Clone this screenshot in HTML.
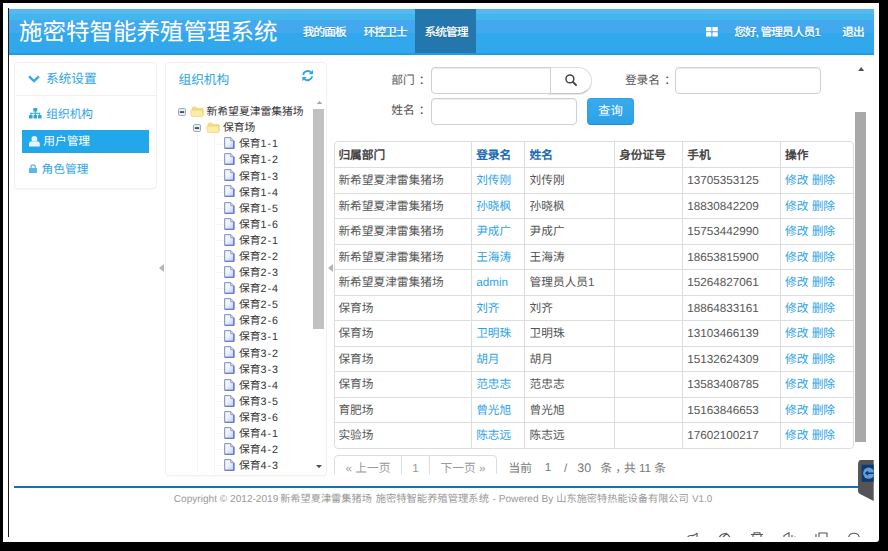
<!DOCTYPE html>
<html lang="zh-CN">
<head>
<meta charset="utf-8">
<title>施密特智能养殖管理系统</title>
<style>
*{box-sizing:border-box;margin:0;padding:0}
html,body{width:888px;height:551px;overflow:hidden;background:#000}
body{position:relative;text-rendering:geometricPrecision;font-family:"Liberation Sans",sans-serif;font-size:11.7px;color:#555}
.abs,.tg,.tt,.hl{position:absolute}
#win{position:absolute;left:3px;top:3px;width:876px;height:539px;background:#fff;border-bottom-right-radius:3px}
#lline{position:absolute;left:8px;top:8px;width:1px;height:529px;background:#1c1c1c}
#hdr{position:absolute;left:9px;top:9px;width:865px;height:45.6px;
 background:linear-gradient(to bottom,#55b8ee 0,#55b8ee 4.9px,#42b7ee 4.9px,#42b7ee 10.9px,#44a8ee 10.9px,#44a8ee 24px,#31a7ec 24px,#31a7ec 44px,#1c9ee6 44px,#1c9ee6 100%)}
#brand{position:absolute;left:18.9px;top:15.5px;height:32px;line-height:32px;font-size:23.5px;color:#fff;white-space:nowrap;font-weight:300}
.nav{position:absolute;top:11px;height:44px;line-height:44px;font-size:11.7px;color:#fff;white-space:nowrap;letter-spacing:-.9px;font-weight:normal;text-shadow:.4px 0 0 rgba(255,255,255,.8),0 1px 1px rgba(0,0,0,.18)}
#act{position:absolute;left:415px;top:9px;width:60.8px;height:44px;background:#2377ad}
.panel{position:absolute;background:#fff;border:1px solid #f0f0f0;border-radius:4px;box-shadow:0 1px 1px rgba(0,0,0,.025)}
.lnk{color:#2fa4e7}
.sb{position:absolute;white-space:nowrap;font-size:11.7px;color:#2fa4e7;line-height:14px}
.tt{white-space:nowrap;font-size:10.8px;color:#333;line-height:16px;height:16px}
.vd{font-size:10.7px;letter-spacing:.9px}
.hl{width:9px;height:0;border-top:1px dotted #eee}
.vl{position:absolute;width:0;border-left:1px dotted #eee}
.lab{position:absolute;white-space:nowrap;font-size:11.7px;color:#555;line-height:16px;text-align:left}
.lab i{font-style:normal;margin-left:4.2px}
.inp{position:absolute;background:#fff;border:1px solid #d0d0d0;border-radius:4px;box-shadow:inset 0 1px 1px rgba(0,0,0,.075)}
table{position:absolute;left:334.2px;top:141.3px;width:520.2px;border-collapse:separate;border-spacing:0;font-size:11.7px;color:#555;border:1px solid #ddd;border-radius:4px;table-layout:fixed}
td,th{height:25.5px;padding:.8px 0 0 4.2px;text-align:left;vertical-align:middle;border-top:1px solid #ddd;border-left:1px solid #ddd;white-space:nowrap;overflow:hidden;line-height:14px}
th{border-top:0;height:25.1px;color:#444;font-weight:bold;padding-top:2.6px}
td:first-child,th:first-child{border-left:0;padding-left:3.2px}
td:nth-child(3),th:nth-child(3){padding-left:5px}
th.s{color:#1a6db3}
td a{color:#2fa4e7}
.ft{position:absolute;top:493px;font-size:10.2px;color:#999;line-height:14px;white-space:nowrap}
.pg{position:absolute;top:455px;height:26px;border:1px solid #ddd;font-size:11.7px;color:#999;line-height:26px;text-align:center;white-space:nowrap;background:#fff}
</style>
</head>
<body>
<div id="win"></div>
<div id="lline"></div>

<!-- header -->
<div id="hdr"></div>
<div id="act"></div>
<div id="brand">施密特智能养殖管理系统</div>
<div class="nav" style="left:302.5px">我的面板</div>
<div class="nav" style="left:363.5px">环控卫士</div>
<div class="nav" style="left:424.3px">系统管理</div>
<svg class="abs" style="left:705.5px;top:27px" width="12" height="10" viewBox="0 0 12 10"><g fill="#fff"><rect x="0" y="0" width="5.4" height="4.3" rx=".6"/><rect x="6.4" y="0" width="5.4" height="4.3" rx=".6"/><rect x="0" y="5.3" width="5.4" height="4.3" rx=".6"/><rect x="6.4" y="5.3" width="5.4" height="4.3" rx=".6"/></g></svg>
<div class="nav" style="left:734px">您好, 管理员人员1</div>
<div class="nav" style="left:842px">退出</div>

<!-- left sidebar -->
<div class="panel" style="left:14px;top:61.5px;width:142.5px;height:127px"></div>
<div class="abs" style="left:15.5px;top:94.5px;width:140px;height:1px;background:#f0f0f0"></div>
<svg class="abs" style="left:28.2px;top:75.2px" width="12" height="8" viewBox="0 0 12 8"><path d="M1.1 1.3 L6 6.1 L10.9 1.3" fill="none" stroke="#36a7e8" stroke-width="2.4" stroke-linecap="butt"/></svg>
<div class="sb" style="left:45.9px;top:71.6px;font-size:12.7px">系统设置</div>

<svg class="abs" style="left:29px;top:108.2px" width="12.6" height="10.6" viewBox="0 0 12.6 10.6"><g fill="#2fa4e7"><rect x="4.3" y="0" width="4" height="3.4" rx=".5"/><rect x="0" y="7" width="3.6" height="3.4" rx=".5"/><rect x="4.5" y="7" width="3.6" height="3.4" rx=".5"/><rect x="9" y="7" width="3.6" height="3.4" rx=".5"/><rect x="5.8" y="3" width="1" height="4"/><rect x="1.4" y="4.8" width="9.8" height="1"/><rect x="1.4" y="4.8" width="1" height="2.4"/><rect x="10.2" y="4.8" width="1" height="2.4"/></g></svg>
<div class="sb" style="left:46.3px;top:107.7px">组织机构</div>

<div class="abs" style="left:22.3px;top:130.3px;width:126.7px;height:22.8px;background:#22a7ea"></div>
<svg class="abs" style="left:29.2px;top:136.3px" width="10.8" height="10.4" viewBox="0 0 10.8 10.4"><g fill="#e9f5fd"><circle cx="5.4" cy="2.9" r="2.9"/><path d="M0 10.4 V8.3 Q0 5.4 3 5.2 Q5.4 6.8 7.8 5.2 Q10.8 5.4 10.8 8.3 V10.4 Z"/></g></svg>
<div class="sb" style="left:43.3px;top:135.4px;color:#fff">用户管理</div>

<svg class="abs" style="left:29.2px;top:163.8px" width="8.2" height="9.2" viewBox="0 0 8.2 9.2"><path d="M2 4 V2.6 Q2 .8 4.1 .8 Q6.2 .8 6.2 2.6 V4" fill="none" stroke="#5bb6ec" stroke-width="1.3"/><rect x="0" y="3.9" width="8.2" height="5.3" rx=".8" fill="#5bb6ec"/></svg>
<div class="sb" style="left:41.6px;top:162.5px">角色管理</div>

<!-- collapse arrows -->
<svg class="abs" style="left:159px;top:264.3px" width="5" height="8" viewBox="0 0 5 8"><path d="M5 0 V8 L0 4 Z" fill="#b5b5b5"/></svg>
<svg class="abs" style="left:328.3px;top:264.3px" width="5" height="8" viewBox="0 0 5 8"><path d="M5 0 V8 L0 4 Z" fill="#b5b5b5"/></svg>

<!-- middle panel -->
<div class="panel" style="left:165px;top:61.5px;width:161.5px;height:414px"></div>
<div class="sb" style="left:178.5px;top:72.6px;font-size:12.7px">组织机构</div>
<svg class="abs" style="left:301.8px;top:70.4px" width="11.4" height="11.2" viewBox="0 0 11.4 11.2"><g fill="none" stroke="#2fa4e7" stroke-width="1.9"><path d="M1.2 4.9 A4.6 4.6 0 0 1 9.2 2.6"/><path d="M10.2 6.3 A4.6 4.6 0 0 1 2.2 8.6"/></g><path d="M11 0 V4.2 H6.8 Z" fill="#2fa4e7"/><path d="M.4 11.2 V7 H4.6 Z" fill="#2fa4e7"/></svg>
<div class="vl" style="left:197px;top:119px;height:355px"></div>
<div class="vl" style="left:214px;top:135px;height:339px"></div>
<svg class="tg" style="left:178px;top:108.0px" width="8" height="8" viewBox="0 0 8 8"><rect x="0.5" y="0.5" width="7" height="7" rx="1.2" fill="#e9edf2" stroke="#96abc8"/><rect x="1.9" y="3.3" width="4.2" height="1.5" fill="#2a2a2a"/></svg>
<svg class="tg" style="left:190px;top:105.8px" width="14.4" height="11.4" viewBox="0 0 15 12" preserveAspectRatio="none"><path d="M2.2 2.6 Q2.2 1.2 3.6 1.2 H6.2 L7.6 2.6 H12.6 Q13.8 2.6 13.8 3.8 V9.5 H2.2 Z" fill="#f7dc83" stroke="#edc968" stroke-width=".7"/><path d="M.7 5.4 Q.5 4.3 1.7 4.3 H11.6 Q12.7 4.3 12.9 5.4 L13.6 10 Q13.7 11.2 12.6 11.2 H2.6 Q1.5 11.2 1.4 10 Z" fill="#fcecaa" stroke="#efd070" stroke-width=".7"/></svg>
<div class="tt" style="left:206.5px;top:104.20px">新希望夏津雷集猪场</div>
<svg class="tg" style="left:193.3px;top:124.09px" width="8" height="8" viewBox="0 0 8 8"><rect x="0.5" y="0.5" width="7" height="7" rx="1.2" fill="#e9edf2" stroke="#96abc8"/><rect x="1.9" y="3.3" width="4.2" height="1.5" fill="#2a2a2a"/></svg>
<svg class="tg" style="left:206.3px;top:121.89px" width="14.4" height="11.4" viewBox="0 0 15 12" preserveAspectRatio="none"><path d="M2.2 2.6 Q2.2 1.2 3.6 1.2 H6.2 L7.6 2.6 H12.6 Q13.8 2.6 13.8 3.8 V9.5 H2.2 Z" fill="#f7dc83" stroke="#edc968" stroke-width=".7"/><path d="M.7 5.4 Q.5 4.3 1.7 4.3 H11.6 Q12.7 4.3 12.9 5.4 L13.6 10 Q13.7 11.2 12.6 11.2 H2.6 Q1.5 11.2 1.4 10 Z" fill="#fcecaa" stroke="#efd070" stroke-width=".7"/></svg>
<div class="tt" style="left:223px;top:120.29px">保育场</div>
<div class="hl" style="left:214px;top:143.68px"></div>
<svg class="tg" style="left:224px;top:137.18px" width="10.6" height="12" viewBox="0 0 11 13" preserveAspectRatio="none"><defs><linearGradient id="fg0" x1="0" y1="0" x2="1" y2="1"><stop offset="0" stop-color="#ffffff"/><stop offset=".5" stop-color="#eaf1fd"/><stop offset="1" stop-color="#b4c8f2"/></linearGradient></defs><path d="M.7 .7 H7 L10.3 4 V12.3 H.7 Z" fill="url(#fg0)" stroke="#7380c2" stroke-width="1"/><path d="M1 12.2 H10.2 V4.4" fill="none" stroke="#6474c4" stroke-width="1.3"/><path d="M7 .7 V4 H10.3" fill="#dfe6f8" stroke="#7380c2" stroke-width=".8"/></svg>
<div class="tt" style="left:239px;top:136.38px">保育<span class="vd">1-1</span></div>
<div class="hl" style="left:214px;top:159.77px"></div>
<svg class="tg" style="left:224px;top:153.27px" width="10.6" height="12" viewBox="0 0 11 13" preserveAspectRatio="none"><defs><linearGradient id="fg1" x1="0" y1="0" x2="1" y2="1"><stop offset="0" stop-color="#ffffff"/><stop offset=".5" stop-color="#eaf1fd"/><stop offset="1" stop-color="#b4c8f2"/></linearGradient></defs><path d="M.7 .7 H7 L10.3 4 V12.3 H.7 Z" fill="url(#fg1)" stroke="#7380c2" stroke-width="1"/><path d="M1 12.2 H10.2 V4.4" fill="none" stroke="#6474c4" stroke-width="1.3"/><path d="M7 .7 V4 H10.3" fill="#dfe6f8" stroke="#7380c2" stroke-width=".8"/></svg>
<div class="tt" style="left:239px;top:152.47px">保育<span class="vd">1-2</span></div>
<div class="hl" style="left:214px;top:175.86px"></div>
<svg class="tg" style="left:224px;top:169.36px" width="10.6" height="12" viewBox="0 0 11 13" preserveAspectRatio="none"><defs><linearGradient id="fg2" x1="0" y1="0" x2="1" y2="1"><stop offset="0" stop-color="#ffffff"/><stop offset=".5" stop-color="#eaf1fd"/><stop offset="1" stop-color="#b4c8f2"/></linearGradient></defs><path d="M.7 .7 H7 L10.3 4 V12.3 H.7 Z" fill="url(#fg2)" stroke="#7380c2" stroke-width="1"/><path d="M1 12.2 H10.2 V4.4" fill="none" stroke="#6474c4" stroke-width="1.3"/><path d="M7 .7 V4 H10.3" fill="#dfe6f8" stroke="#7380c2" stroke-width=".8"/></svg>
<div class="tt" style="left:239px;top:168.56px">保育<span class="vd">1-3</span></div>
<div class="hl" style="left:214px;top:191.95px"></div>
<svg class="tg" style="left:224px;top:185.45px" width="10.6" height="12" viewBox="0 0 11 13" preserveAspectRatio="none"><defs><linearGradient id="fg3" x1="0" y1="0" x2="1" y2="1"><stop offset="0" stop-color="#ffffff"/><stop offset=".5" stop-color="#eaf1fd"/><stop offset="1" stop-color="#b4c8f2"/></linearGradient></defs><path d="M.7 .7 H7 L10.3 4 V12.3 H.7 Z" fill="url(#fg3)" stroke="#7380c2" stroke-width="1"/><path d="M1 12.2 H10.2 V4.4" fill="none" stroke="#6474c4" stroke-width="1.3"/><path d="M7 .7 V4 H10.3" fill="#dfe6f8" stroke="#7380c2" stroke-width=".8"/></svg>
<div class="tt" style="left:239px;top:184.65px">保育<span class="vd">1-4</span></div>
<div class="hl" style="left:214px;top:208.04px"></div>
<svg class="tg" style="left:224px;top:201.54px" width="10.6" height="12" viewBox="0 0 11 13" preserveAspectRatio="none"><defs><linearGradient id="fg4" x1="0" y1="0" x2="1" y2="1"><stop offset="0" stop-color="#ffffff"/><stop offset=".5" stop-color="#eaf1fd"/><stop offset="1" stop-color="#b4c8f2"/></linearGradient></defs><path d="M.7 .7 H7 L10.3 4 V12.3 H.7 Z" fill="url(#fg4)" stroke="#7380c2" stroke-width="1"/><path d="M1 12.2 H10.2 V4.4" fill="none" stroke="#6474c4" stroke-width="1.3"/><path d="M7 .7 V4 H10.3" fill="#dfe6f8" stroke="#7380c2" stroke-width=".8"/></svg>
<div class="tt" style="left:239px;top:200.74px">保育<span class="vd">1-5</span></div>
<div class="hl" style="left:214px;top:224.13px"></div>
<svg class="tg" style="left:224px;top:217.63px" width="10.6" height="12" viewBox="0 0 11 13" preserveAspectRatio="none"><defs><linearGradient id="fg5" x1="0" y1="0" x2="1" y2="1"><stop offset="0" stop-color="#ffffff"/><stop offset=".5" stop-color="#eaf1fd"/><stop offset="1" stop-color="#b4c8f2"/></linearGradient></defs><path d="M.7 .7 H7 L10.3 4 V12.3 H.7 Z" fill="url(#fg5)" stroke="#7380c2" stroke-width="1"/><path d="M1 12.2 H10.2 V4.4" fill="none" stroke="#6474c4" stroke-width="1.3"/><path d="M7 .7 V4 H10.3" fill="#dfe6f8" stroke="#7380c2" stroke-width=".8"/></svg>
<div class="tt" style="left:239px;top:216.83px">保育<span class="vd">1-6</span></div>
<div class="hl" style="left:214px;top:240.22px"></div>
<svg class="tg" style="left:224px;top:233.72px" width="10.6" height="12" viewBox="0 0 11 13" preserveAspectRatio="none"><defs><linearGradient id="fg6" x1="0" y1="0" x2="1" y2="1"><stop offset="0" stop-color="#ffffff"/><stop offset=".5" stop-color="#eaf1fd"/><stop offset="1" stop-color="#b4c8f2"/></linearGradient></defs><path d="M.7 .7 H7 L10.3 4 V12.3 H.7 Z" fill="url(#fg6)" stroke="#7380c2" stroke-width="1"/><path d="M1 12.2 H10.2 V4.4" fill="none" stroke="#6474c4" stroke-width="1.3"/><path d="M7 .7 V4 H10.3" fill="#dfe6f8" stroke="#7380c2" stroke-width=".8"/></svg>
<div class="tt" style="left:239px;top:232.92px">保育<span class="vd">2-1</span></div>
<div class="hl" style="left:214px;top:256.31px"></div>
<svg class="tg" style="left:224px;top:249.81px" width="10.6" height="12" viewBox="0 0 11 13" preserveAspectRatio="none"><defs><linearGradient id="fg7" x1="0" y1="0" x2="1" y2="1"><stop offset="0" stop-color="#ffffff"/><stop offset=".5" stop-color="#eaf1fd"/><stop offset="1" stop-color="#b4c8f2"/></linearGradient></defs><path d="M.7 .7 H7 L10.3 4 V12.3 H.7 Z" fill="url(#fg7)" stroke="#7380c2" stroke-width="1"/><path d="M1 12.2 H10.2 V4.4" fill="none" stroke="#6474c4" stroke-width="1.3"/><path d="M7 .7 V4 H10.3" fill="#dfe6f8" stroke="#7380c2" stroke-width=".8"/></svg>
<div class="tt" style="left:239px;top:249.01px">保育<span class="vd">2-2</span></div>
<div class="hl" style="left:214px;top:272.40px"></div>
<svg class="tg" style="left:224px;top:265.9px" width="10.6" height="12" viewBox="0 0 11 13" preserveAspectRatio="none"><defs><linearGradient id="fg8" x1="0" y1="0" x2="1" y2="1"><stop offset="0" stop-color="#ffffff"/><stop offset=".5" stop-color="#eaf1fd"/><stop offset="1" stop-color="#b4c8f2"/></linearGradient></defs><path d="M.7 .7 H7 L10.3 4 V12.3 H.7 Z" fill="url(#fg8)" stroke="#7380c2" stroke-width="1"/><path d="M1 12.2 H10.2 V4.4" fill="none" stroke="#6474c4" stroke-width="1.3"/><path d="M7 .7 V4 H10.3" fill="#dfe6f8" stroke="#7380c2" stroke-width=".8"/></svg>
<div class="tt" style="left:239px;top:265.10px">保育<span class="vd">2-3</span></div>
<div class="hl" style="left:214px;top:288.49px"></div>
<svg class="tg" style="left:224px;top:281.99px" width="10.6" height="12" viewBox="0 0 11 13" preserveAspectRatio="none"><defs><linearGradient id="fg9" x1="0" y1="0" x2="1" y2="1"><stop offset="0" stop-color="#ffffff"/><stop offset=".5" stop-color="#eaf1fd"/><stop offset="1" stop-color="#b4c8f2"/></linearGradient></defs><path d="M.7 .7 H7 L10.3 4 V12.3 H.7 Z" fill="url(#fg9)" stroke="#7380c2" stroke-width="1"/><path d="M1 12.2 H10.2 V4.4" fill="none" stroke="#6474c4" stroke-width="1.3"/><path d="M7 .7 V4 H10.3" fill="#dfe6f8" stroke="#7380c2" stroke-width=".8"/></svg>
<div class="tt" style="left:239px;top:281.19px">保育<span class="vd">2-4</span></div>
<div class="hl" style="left:214px;top:304.58px"></div>
<svg class="tg" style="left:224px;top:298.08px" width="10.6" height="12" viewBox="0 0 11 13" preserveAspectRatio="none"><defs><linearGradient id="fg10" x1="0" y1="0" x2="1" y2="1"><stop offset="0" stop-color="#ffffff"/><stop offset=".5" stop-color="#eaf1fd"/><stop offset="1" stop-color="#b4c8f2"/></linearGradient></defs><path d="M.7 .7 H7 L10.3 4 V12.3 H.7 Z" fill="url(#fg10)" stroke="#7380c2" stroke-width="1"/><path d="M1 12.2 H10.2 V4.4" fill="none" stroke="#6474c4" stroke-width="1.3"/><path d="M7 .7 V4 H10.3" fill="#dfe6f8" stroke="#7380c2" stroke-width=".8"/></svg>
<div class="tt" style="left:239px;top:297.28px">保育<span class="vd">2-5</span></div>
<div class="hl" style="left:214px;top:320.67px"></div>
<svg class="tg" style="left:224px;top:314.17px" width="10.6" height="12" viewBox="0 0 11 13" preserveAspectRatio="none"><defs><linearGradient id="fg11" x1="0" y1="0" x2="1" y2="1"><stop offset="0" stop-color="#ffffff"/><stop offset=".5" stop-color="#eaf1fd"/><stop offset="1" stop-color="#b4c8f2"/></linearGradient></defs><path d="M.7 .7 H7 L10.3 4 V12.3 H.7 Z" fill="url(#fg11)" stroke="#7380c2" stroke-width="1"/><path d="M1 12.2 H10.2 V4.4" fill="none" stroke="#6474c4" stroke-width="1.3"/><path d="M7 .7 V4 H10.3" fill="#dfe6f8" stroke="#7380c2" stroke-width=".8"/></svg>
<div class="tt" style="left:239px;top:313.37px">保育<span class="vd">2-6</span></div>
<div class="hl" style="left:214px;top:336.76px"></div>
<svg class="tg" style="left:224px;top:330.26px" width="10.6" height="12" viewBox="0 0 11 13" preserveAspectRatio="none"><defs><linearGradient id="fg12" x1="0" y1="0" x2="1" y2="1"><stop offset="0" stop-color="#ffffff"/><stop offset=".5" stop-color="#eaf1fd"/><stop offset="1" stop-color="#b4c8f2"/></linearGradient></defs><path d="M.7 .7 H7 L10.3 4 V12.3 H.7 Z" fill="url(#fg12)" stroke="#7380c2" stroke-width="1"/><path d="M1 12.2 H10.2 V4.4" fill="none" stroke="#6474c4" stroke-width="1.3"/><path d="M7 .7 V4 H10.3" fill="#dfe6f8" stroke="#7380c2" stroke-width=".8"/></svg>
<div class="tt" style="left:239px;top:329.46px">保育<span class="vd">3-1</span></div>
<div class="hl" style="left:214px;top:352.85px"></div>
<svg class="tg" style="left:224px;top:346.35px" width="10.6" height="12" viewBox="0 0 11 13" preserveAspectRatio="none"><defs><linearGradient id="fg13" x1="0" y1="0" x2="1" y2="1"><stop offset="0" stop-color="#ffffff"/><stop offset=".5" stop-color="#eaf1fd"/><stop offset="1" stop-color="#b4c8f2"/></linearGradient></defs><path d="M.7 .7 H7 L10.3 4 V12.3 H.7 Z" fill="url(#fg13)" stroke="#7380c2" stroke-width="1"/><path d="M1 12.2 H10.2 V4.4" fill="none" stroke="#6474c4" stroke-width="1.3"/><path d="M7 .7 V4 H10.3" fill="#dfe6f8" stroke="#7380c2" stroke-width=".8"/></svg>
<div class="tt" style="left:239px;top:345.55px">保育<span class="vd">3-2</span></div>
<div class="hl" style="left:214px;top:368.94px"></div>
<svg class="tg" style="left:224px;top:362.44px" width="10.6" height="12" viewBox="0 0 11 13" preserveAspectRatio="none"><defs><linearGradient id="fg14" x1="0" y1="0" x2="1" y2="1"><stop offset="0" stop-color="#ffffff"/><stop offset=".5" stop-color="#eaf1fd"/><stop offset="1" stop-color="#b4c8f2"/></linearGradient></defs><path d="M.7 .7 H7 L10.3 4 V12.3 H.7 Z" fill="url(#fg14)" stroke="#7380c2" stroke-width="1"/><path d="M1 12.2 H10.2 V4.4" fill="none" stroke="#6474c4" stroke-width="1.3"/><path d="M7 .7 V4 H10.3" fill="#dfe6f8" stroke="#7380c2" stroke-width=".8"/></svg>
<div class="tt" style="left:239px;top:361.64px">保育<span class="vd">3-3</span></div>
<div class="hl" style="left:214px;top:385.03px"></div>
<svg class="tg" style="left:224px;top:378.53px" width="10.6" height="12" viewBox="0 0 11 13" preserveAspectRatio="none"><defs><linearGradient id="fg15" x1="0" y1="0" x2="1" y2="1"><stop offset="0" stop-color="#ffffff"/><stop offset=".5" stop-color="#eaf1fd"/><stop offset="1" stop-color="#b4c8f2"/></linearGradient></defs><path d="M.7 .7 H7 L10.3 4 V12.3 H.7 Z" fill="url(#fg15)" stroke="#7380c2" stroke-width="1"/><path d="M1 12.2 H10.2 V4.4" fill="none" stroke="#6474c4" stroke-width="1.3"/><path d="M7 .7 V4 H10.3" fill="#dfe6f8" stroke="#7380c2" stroke-width=".8"/></svg>
<div class="tt" style="left:239px;top:377.73px">保育<span class="vd">3-4</span></div>
<div class="hl" style="left:214px;top:401.12px"></div>
<svg class="tg" style="left:224px;top:394.62px" width="10.6" height="12" viewBox="0 0 11 13" preserveAspectRatio="none"><defs><linearGradient id="fg16" x1="0" y1="0" x2="1" y2="1"><stop offset="0" stop-color="#ffffff"/><stop offset=".5" stop-color="#eaf1fd"/><stop offset="1" stop-color="#b4c8f2"/></linearGradient></defs><path d="M.7 .7 H7 L10.3 4 V12.3 H.7 Z" fill="url(#fg16)" stroke="#7380c2" stroke-width="1"/><path d="M1 12.2 H10.2 V4.4" fill="none" stroke="#6474c4" stroke-width="1.3"/><path d="M7 .7 V4 H10.3" fill="#dfe6f8" stroke="#7380c2" stroke-width=".8"/></svg>
<div class="tt" style="left:239px;top:393.82px">保育<span class="vd">3-5</span></div>
<div class="hl" style="left:214px;top:417.21px"></div>
<svg class="tg" style="left:224px;top:410.71px" width="10.6" height="12" viewBox="0 0 11 13" preserveAspectRatio="none"><defs><linearGradient id="fg17" x1="0" y1="0" x2="1" y2="1"><stop offset="0" stop-color="#ffffff"/><stop offset=".5" stop-color="#eaf1fd"/><stop offset="1" stop-color="#b4c8f2"/></linearGradient></defs><path d="M.7 .7 H7 L10.3 4 V12.3 H.7 Z" fill="url(#fg17)" stroke="#7380c2" stroke-width="1"/><path d="M1 12.2 H10.2 V4.4" fill="none" stroke="#6474c4" stroke-width="1.3"/><path d="M7 .7 V4 H10.3" fill="#dfe6f8" stroke="#7380c2" stroke-width=".8"/></svg>
<div class="tt" style="left:239px;top:409.91px">保育<span class="vd">3-6</span></div>
<div class="hl" style="left:214px;top:433.30px"></div>
<svg class="tg" style="left:224px;top:426.8px" width="10.6" height="12" viewBox="0 0 11 13" preserveAspectRatio="none"><defs><linearGradient id="fg18" x1="0" y1="0" x2="1" y2="1"><stop offset="0" stop-color="#ffffff"/><stop offset=".5" stop-color="#eaf1fd"/><stop offset="1" stop-color="#b4c8f2"/></linearGradient></defs><path d="M.7 .7 H7 L10.3 4 V12.3 H.7 Z" fill="url(#fg18)" stroke="#7380c2" stroke-width="1"/><path d="M1 12.2 H10.2 V4.4" fill="none" stroke="#6474c4" stroke-width="1.3"/><path d="M7 .7 V4 H10.3" fill="#dfe6f8" stroke="#7380c2" stroke-width=".8"/></svg>
<div class="tt" style="left:239px;top:426.00px">保育<span class="vd">4-1</span></div>
<div class="hl" style="left:214px;top:449.39px"></div>
<svg class="tg" style="left:224px;top:442.89px" width="10.6" height="12" viewBox="0 0 11 13" preserveAspectRatio="none"><defs><linearGradient id="fg19" x1="0" y1="0" x2="1" y2="1"><stop offset="0" stop-color="#ffffff"/><stop offset=".5" stop-color="#eaf1fd"/><stop offset="1" stop-color="#b4c8f2"/></linearGradient></defs><path d="M.7 .7 H7 L10.3 4 V12.3 H.7 Z" fill="url(#fg19)" stroke="#7380c2" stroke-width="1"/><path d="M1 12.2 H10.2 V4.4" fill="none" stroke="#6474c4" stroke-width="1.3"/><path d="M7 .7 V4 H10.3" fill="#dfe6f8" stroke="#7380c2" stroke-width=".8"/></svg>
<div class="tt" style="left:239px;top:442.09px">保育<span class="vd">4-2</span></div>
<div class="hl" style="left:214px;top:465.48px"></div>
<svg class="tg" style="left:224px;top:458.98px" width="10.6" height="12" viewBox="0 0 11 13" preserveAspectRatio="none"><defs><linearGradient id="fg20" x1="0" y1="0" x2="1" y2="1"><stop offset="0" stop-color="#ffffff"/><stop offset=".5" stop-color="#eaf1fd"/><stop offset="1" stop-color="#b4c8f2"/></linearGradient></defs><path d="M.7 .7 H7 L10.3 4 V12.3 H.7 Z" fill="url(#fg20)" stroke="#7380c2" stroke-width="1"/><path d="M1 12.2 H10.2 V4.4" fill="none" stroke="#6474c4" stroke-width="1.3"/><path d="M7 .7 V4 H10.3" fill="#dfe6f8" stroke="#7380c2" stroke-width=".8"/></svg>
<div class="tt" style="left:239px;top:458.18px">保育<span class="vd">4-3</span></div>
<!-- tree scrollbar -->
<svg class="abs" style="left:315.5px;top:100.6px" width="7" height="3.8" viewBox="0 0 7 3.8"><path d="M0 3.8 L3.5 0 L7 3.8 Z" fill="#a6a6a6"/></svg>
<div class="abs" style="left:313.4px;top:109.3px;width:10.8px;height:220.2px;background:#c1c1c1"></div>
<svg class="abs" style="left:316px;top:465px" width="6" height="3.2" viewBox="0 0 6 3.2"><path d="M0 0 L3 3.2 L6 0 Z" fill="#505050"/></svg>

<!-- form -->
<div class="lab" style="left:391.2px;top:72.8px">部门<i>：</i></div>
<div class="lab" style="left:391.2px;top:103.4px">姓名<i>：</i></div>
<div class="lab" style="left:624.9px;top:72.8px">登录名<i>：</i></div>
<div class="abs" style="left:548px;top:66.8px;width:44px;height:26.9px;background:#fff;border:1px solid #dedede;border-bottom-color:#c4c4c4;border-radius:0 13.5px 13.5px 0;box-shadow:0 1px 1px rgba(0,0,0,.1)"></div>
<div class="inp" style="left:431.2px;top:66.8px;width:119.6px;height:26.9px;border-radius:4px 0 0 4px"></div>
<svg class="abs" style="left:564.5px;top:74.3px" width="12" height="12" viewBox="0 0 12 12"><circle cx="4.9" cy="4.9" r="3.9" fill="none" stroke="#444" stroke-width="1.5"/><path d="M7.9 7.9 L11 11" stroke="#444" stroke-width="1.9" stroke-linecap="round"/></svg>
<div class="inp" style="left:431.2px;top:98.4px;width:145.6px;height:26.4px"></div>
<div class="inp" style="left:675.3px;top:66.8px;width:145.6px;height:26.9px"></div>
<div class="abs" style="left:587px;top:98.4px;width:46.9px;height:26.4px;border-radius:4px;background:linear-gradient(#3aaae9,#31a6e9 60%,#2da1e5);border:1px solid #2f9fe2;border-bottom-color:#2189cc;color:#fff;font-size:12.4px;line-height:24px;text-align:center">查询</div>

<!-- table -->
<table>
<colgroup><col style="width:135.8px"><col style="width:52.6px"><col style="width:90.4px"><col style="width:68.2px"><col style="width:97.7px"><col></colgroup>
<tr><th>归属部门</th><th class="s">登录名</th><th class="s">姓名</th><th>身份证号</th><th>手机</th><th>操作</th></tr>
<tr><td>新希望夏津雷集猪场</td><td><a>刘传刚</a></td><td>刘传刚</td><td></td><td>13705353125</td><td><a>修改</a> <a>删除</a></td></tr>
<tr><td>新希望夏津雷集猪场</td><td><a>孙晓枫</a></td><td>孙晓枫</td><td></td><td>18830842209</td><td><a>修改</a> <a>删除</a></td></tr>
<tr><td>新希望夏津雷集猪场</td><td><a>尹成广</a></td><td>尹成广</td><td></td><td>15753442990</td><td><a>修改</a> <a>删除</a></td></tr>
<tr><td>新希望夏津雷集猪场</td><td><a>王海涛</a></td><td>王海涛</td><td></td><td>18653815900</td><td><a>修改</a> <a>删除</a></td></tr>
<tr><td>新希望夏津雷集猪场</td><td><a>admin</a></td><td>管理员人员1</td><td></td><td>15264827061</td><td><a>修改</a> <a>删除</a></td></tr>
<tr><td>保育场</td><td><a>刘齐</a></td><td>刘齐</td><td></td><td>18864833161</td><td><a>修改</a> <a>删除</a></td></tr>
<tr><td>保育场</td><td><a>卫明珠</a></td><td>卫明珠</td><td></td><td>13103466139</td><td><a>修改</a> <a>删除</a></td></tr>
<tr><td>保育场</td><td><a>胡月</a></td><td>胡月</td><td></td><td>15132624309</td><td><a>修改</a> <a>删除</a></td></tr>
<tr><td>保育场</td><td><a>范忠志</a></td><td>范忠志</td><td></td><td>13583408785</td><td><a>修改</a> <a>删除</a></td></tr>
<tr><td>育肥场</td><td><a>曾光旭</a></td><td>曾光旭</td><td></td><td>15163846653</td><td><a>修改</a> <a>删除</a></td></tr>
<tr><td>实验场</td><td><a>陈志远</a></td><td>陈志远</td><td></td><td>17602100217</td><td><a>修改</a> <a>删除</a></td></tr>
</table>

<!-- main scrollbar -->
<svg class="abs" style="left:857.7px;top:67px" width="6.4" height="4.2" viewBox="0 0 6.4 4.2"><path d="M0 4.2 L3.2 0 L6.4 4.2 Z" fill="#505050"/></svg>
<div class="abs" style="left:855.2px;top:111.5px;width:10.7px;height:330.5px;background:#a9a9a9"></div>

<!-- pagination -->
<div class="pg" style="left:334px;width:68px;border-radius:4px 0 0 4px">« 上一页</div>
<div class="pg" style="left:401px;width:29px">1</div>
<div class="pg" style="left:429px;width:68px;border-radius:0 4px 4px 0">下一页 »</div>
<div class="abs" style="left:508.6px;top:462px;font-size:11.7px;color:#777;line-height:14px;white-space:nowrap">当前</div>
<div class="abs" style="left:544.8px;top:460.6px;font-size:11.7px;color:#777;line-height:14px;white-space:nowrap">1</div>
<div class="abs" style="left:564px;top:461.6px;font-size:11.7px;color:#777;line-height:14px;white-space:nowrap">/</div>
<div class="abs" style="left:577.3px;top:460.6px;font-size:12.4px;color:#777;line-height:14px;white-space:nowrap">30</div>
<div class="abs" style="left:600.6px;top:462px;font-size:11.7px;color:#777;line-height:14px;white-space:nowrap">条<span style="position:relative;left:3px">，</span>共 11 条</div>
<!-- clip cover below pagination -->
<div class="abs" style="left:330px;top:473.8px;width:540px;height:12px;background:#fff"></div>

<!-- footer -->
<div class="abs" style="left:14px;top:486.2px;width:844px;height:1.9px;background:#1a6eb8"></div>
<div class="ft" style="left:173.8px;font-size:10.1px">Copyright © 2012-2019</div>
<div class="ft" style="left:280.2px">新希望夏津雷集猪场</div>
<div class="ft" style="left:375.7px;font-size:10.3px">施密特智能养殖管理系统</div>
<div class="ft" style="left:492.6px;font-size:10.1px">- Powered By</div>
<div class="ft" style="left:556.3px">山东施密特热能设备有限公司</div>
<div class="ft" style="left:692px;font-size:9.9px">V1.0</div>

<!-- teamviewer-like side widget -->
<svg class="abs" style="left:858.3px;top:460px" width="15.7" height="41" viewBox="0 0 15.7 41"><path d="M0 5 Q0 0 3 0 H15.7 V41 L2 34 Q0 33 0 31 Z" fill="#555"/><rect x="3.6" y="4.7" width="12.1" height="17.1" fill="#0d3b6e"/><circle cx="10.7" cy="13.2" r="5.6" fill="#5f9fdb"/><path d="M6.8 13.2 L10.2 10.6 V12.4 H15.7 V14 H10.2 V15.8 Z" fill="#0d3b6e"/></svg>

<!-- bottom toolbar fragments -->
<div class="abs" style="left:680px;top:531.6px;width:190px;height:5.7px;overflow:hidden"><svg style="position:absolute;left:0;top:.4px" width="190" height="6.3" viewBox="0 0 190 6.3"><g fill="none" stroke="#555" stroke-width="1.1"><path d="M7 6.3 Q8 3 12 3.6 Q16 3 17 1 V6.3"/><path d="M39 6.3 Q40 2 45 1.5 Q49 2 50 6.3 M42 6.3 L47 1"/><path d="M71 2.5 H83 M74 2.5 V.8 H80 V2.5 M73 2.5 V6.3 M81 2.5 V6.3 M76 5 V6.3 M78 5 V6.3"/><path d="M104 6.3 V3.5 L109 .8 V6.3 M112 3 V6.3 M115 4.5 V6.3"/><path d="M136 2 V6.3 M139 6.3 V1 H147 V6.3"/><path d="M168.5 6.3 Q169 1.2 174 1.2 Q179 1.2 179.5 6.3"/></g></svg></div>
</body>
</html>
